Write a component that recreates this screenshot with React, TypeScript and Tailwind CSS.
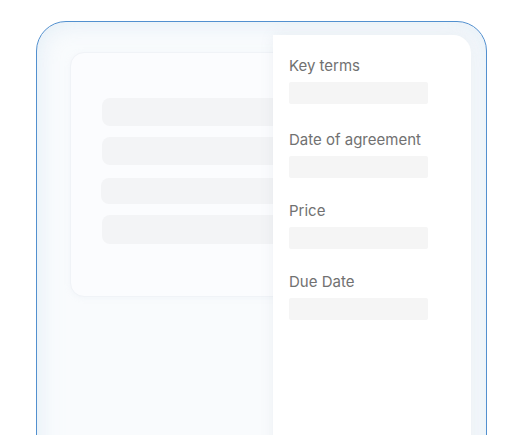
const fields = [
	{ label: "Key terms", mt: "mt-0" },
	{ label: "Date of agreement", mt: "mt-[26px]" },
	{ label: "Price", mt: "mt-[23px]" },
	{ label: "Due Date", mt: "mt-[23px]" },
];

function DocumentCard() {
	return (
		<div className="ml-[33px] mt-[30px] h-[245px] w-[240px] shrink-0 rounded-[14px] border border-[#f0f3f7] bg-[#fbfcfe] pl-[31px] pt-[45px] shadow-[0_1px_6px_rgba(180,200,220,0.10)]">
			<div className="flex flex-col">
				<div className="h-[28px] rounded-[8px] bg-[#f3f4f6]" />
				<div className="mt-[11px] h-[28px] rounded-[8px] bg-[#f3f4f6]" />
				<div className="ml-[-1px] mt-[13px] h-[26px] rounded-[8px] bg-[#f3f4f6]" />
				<div className="mt-[11px] h-[29px] rounded-[8px] bg-[#f3f4f6]" />
			</div>
		</div>
	);
}

function TermsPanel() {
	return (
		<div className="ml-[-37px] mt-[13px] h-[420px] w-[198px] shrink-0 rounded-tr-[18px] bg-white pl-[16px] pt-[21px] shadow-[0_0_14px_rgba(120,140,160,0.10)]">
			{fields.map((f) => (
				<div key={f.label} className={f.mt}>
					<div className="text-[15px] leading-[20px] text-[#717171]">
						{f.label}
					</div>
					<div className="mt-[6px] h-[22px] w-[139px] rounded-[2px] bg-[#f5f5f5]" />
				</div>
			))}
		</div>
	);
}

export default function App() {
	return (
		<div
			className="h-[435px] w-[517px] overflow-hidden bg-white pl-[36px] pt-[21px]"
			style={{ fontFamily: "Inter, 'Noto Sans', sans-serif" }}
		>
			<div className="flex h-[470px] w-[451px] items-start rounded-[30px] border-[1.5px] border-[#5290cf] bg-[#f9fbfd] shadow-[inset_0_0_24px_rgba(208,226,242,0.6)]">
				<DocumentCard />
				<TermsPanel />
			</div>
		</div>
	);
}
